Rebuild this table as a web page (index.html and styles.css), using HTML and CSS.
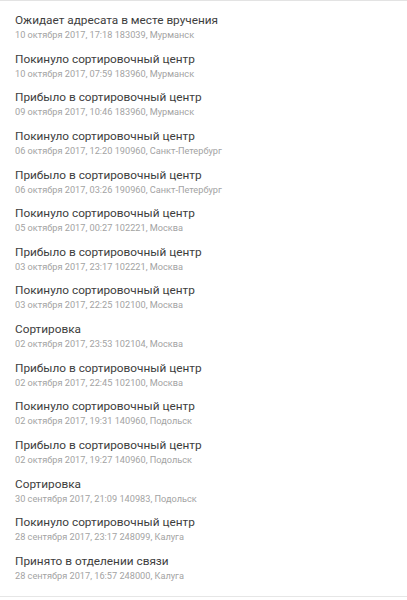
FILE: index.html
```html
<!DOCTYPE html>
<html lang="ru">
<head>
<meta charset="utf-8">
<link rel="stylesheet" href="styles.css">
</head>
<body>
<div class="panel">
  <ul class="history">
    <li class="event"><div class="title">Ожидает адресата в месте вручения</div><div class="meta">10 октября 2017, 17:18 183039, Мурманск</div></li>
    <li class="event"><div class="title">Покинуло сортировочный центр</div><div class="meta">10 октября 2017, 07:59 183960, Мурманск</div></li>
    <li class="event"><div class="title">Прибыло в сортировочный центр</div><div class="meta">09 октября 2017, 10:46 183960, Мурманск</div></li>
    <li class="event"><div class="title">Покинуло сортировочный центр</div><div class="meta">06 октября 2017, 12:20 190960, Санкт-Петербург</div></li>
    <li class="event"><div class="title">Прибыло в сортировочный центр</div><div class="meta">06 октября 2017, 03:26 190960, Санкт-Петербург</div></li>
    <li class="event"><div class="title">Покинуло сортировочный центр</div><div class="meta">05 октября 2017, 00:27 102221, Москва</div></li>
    <li class="event"><div class="title">Прибыло в сортировочный центр</div><div class="meta">03 октября 2017, 23:17 102221, Москва</div></li>
    <li class="event"><div class="title">Покинуло сортировочный центр</div><div class="meta">03 октября 2017, 22:25 102100, Москва</div></li>
    <li class="event"><div class="title">Сортировка</div><div class="meta">02 октября 2017, 23:53 102104, Москва</div></li>
    <li class="event"><div class="title">Прибыло в сортировочный центр</div><div class="meta">02 октября 2017, 22:45 102100, Москва</div></li>
    <li class="event"><div class="title">Покинуло сортировочный центр</div><div class="meta">02 октября 2017, 19:31 140960, Подольск</div></li>
    <li class="event"><div class="title">Прибыло в сортировочный центр</div><div class="meta">02 октября 2017, 19:27 140960, Подольск</div></li>
    <li class="event"><div class="title">Сортировка</div><div class="meta">30 сентября 2017, 21:09 140983, Подольск</div></li>
    <li class="event"><div class="title">Покинуло сортировочный центр</div><div class="meta">28 сентября 2017, 23:17 248099, Калуга</div></li>
    <li class="event"><div class="title">Принято в отделении связи</div><div class="meta">28 сентября 2017, 16:57 248000, Калуга</div></li>
  </ul>
</div>
</body>
</html>
```
FILE: styles.css
```css
html, body {
  margin: 0;
  padding: 0;
  background: #fff;
}
body {
  font-family: Roboto, "Noto Sans", "Liberation Sans", sans-serif;
  width: 407px;
  height: 600px;
  overflow: hidden;
}
.panel {
  border-top: 1px solid #e3e3e3;
  border-bottom: 1px solid #e6e6e6;
  height: 597px;
  box-sizing: border-box;
}
.history {
  list-style: none;
  margin: 0;
  padding: 11px 0 0 15px;
}
.event {
  height: 38.64px;
}
.title {
  font-size: 11.8px;
  line-height: 16px;
  color: #3d3d3d;
}
.meta {
  font-size: 9.2px;
  line-height: 12px;
  margin-top: 1px;
  color: #a3a3a3;
}
```
